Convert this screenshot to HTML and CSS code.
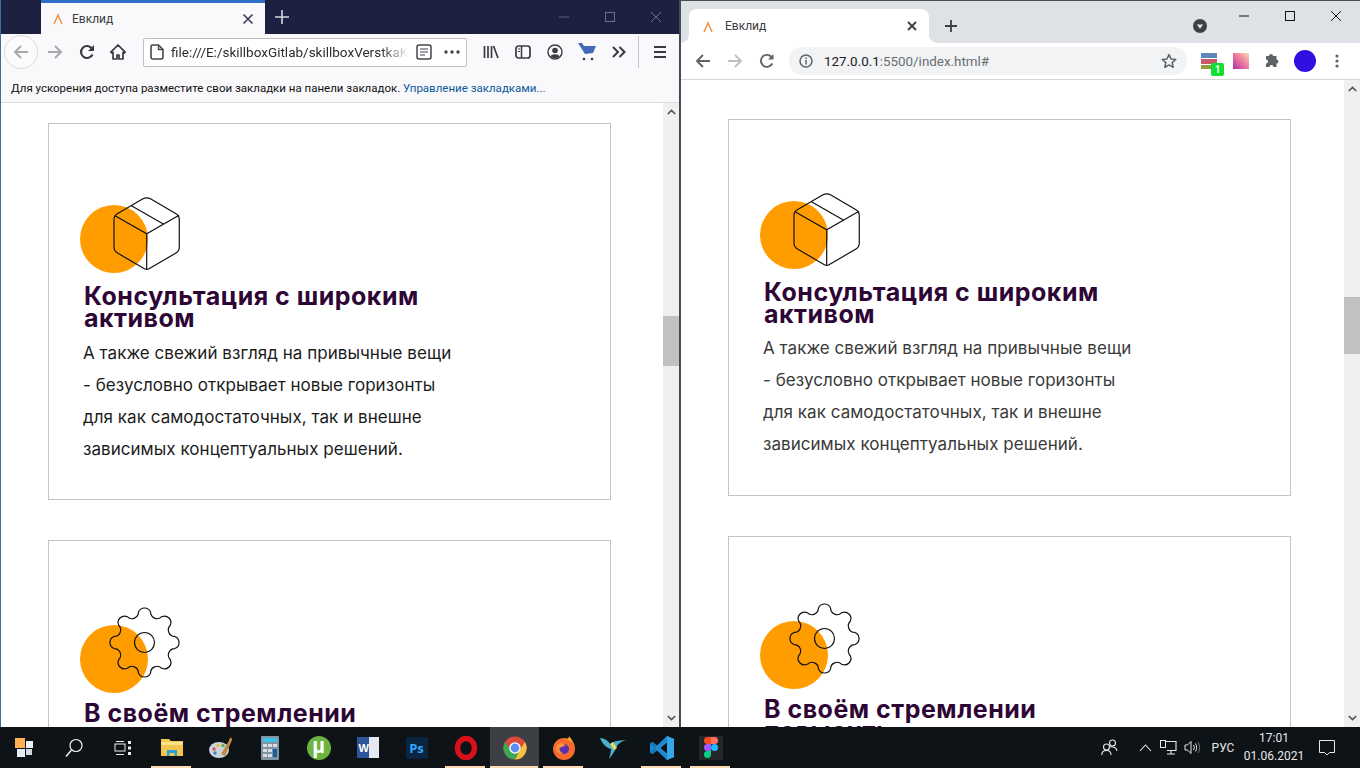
FILE: index.html
```html
<!DOCTYPE html>
<html lang="ru">
<head>
<meta charset="utf-8">
<title>Евклид</title>
<link rel="stylesheet" href="styles.css">
</head>
<body>
<div class="desktop">
  <section class="window ff">
    <div class="ff-tabs">
      <div class="ff-tab">
        <svg class="fav" width="12" height="12" viewBox="0 0 12 12"><path d="M2 11 6 2l4 9M3 8" fill="none" stroke="#f08a3c" stroke-width="1.4"/></svg>
        <span class="tab-title">Евклид</span>
        <svg class="ff-tab-x" width="12" height="12" viewBox="0 0 12 12"><path d="M1.5 1.5l9 9M10.5 1.5l-9 9" stroke="#33364a" stroke-width="1.5"/></svg>
      </div>
      <div class="ff-plus"><svg width="14" height="14" viewBox="0 0 14 14"><path d="M7 0v14M0 7h14" stroke="#d8d9e0" stroke-width="1.6"/></svg></div>
      <div class="grow"></div>
      <div class="ctl"><svg width="12" height="12" viewBox="0 0 12 12"><path d="M1 6h10" stroke="#5c6078"/></svg></div>
      <div class="ctl"><svg width="12" height="12" viewBox="0 0 12 12"><rect x="1.5" y="1.5" width="9" height="9" fill="none" stroke="#6c7088"/></svg></div>
      <div class="ctl"><svg width="12" height="12" viewBox="0 0 12 12"><path d="M1 1l10 10M11 1 1 11" stroke="#6c7088"/></svg></div>
    </div>
    <div class="ff-nav">
      <div class="slot"><div class="ff-back"><svg width="16" height="16" viewBox="0 0 16 16"><path d="M15 8H2M8 2 2 8l6 6" fill="none" stroke="#a8a8ae" stroke-width="2"/></svg></div></div>
      <div class="slot"><svg width="16" height="16" viewBox="0 0 16 16"><path d="M1 8h13M8 2l6 6-6 6" fill="none" stroke="#a8a8ae" stroke-width="2"/></svg></div>
      <div class="slot"><svg width="16" height="16" viewBox="0 0 16 16"><path d="M13.5 10.5A6 6 0 1 1 13 4.6" fill="none" stroke="#3a3a40" stroke-width="2.2"/><path d="M15 1v6H9z" fill="#3a3a40"/></svg></div>
      <div class="slot"><svg width="16" height="16" viewBox="0 0 16 16"><path d="M8 1 .8 8.2l1.2 1L3 8.4V15h4v-4h2v4h4V8.4l1 .8 1.2-1z" fill="none" stroke="#3a3a40" stroke-width="1.7" stroke-linejoin="round"/></svg></div>
      <div></div>
      <div class="ff-url">
        <svg class="page-ico" width="14" height="16" viewBox="0 0 14 16"><path d="M2.5 1h6L13 5.5V13a2 2 0 0 1-2 2H3a2 2 0 0 1-2-2V2.5A1.5 1.5 0 0 1 2.5 1z" fill="none" stroke="#45454c" stroke-width="1.6"/><path d="M8.5 1v4.500H13" fill="none" stroke="#45454c" stroke-width="1.3"/></svg>
        <span class="ff-url-text">file:///E:/skillboxGitlab/skillboxVerstkaKu</span>
        <svg class="reader" width="16" height="16" viewBox="0 0 16 16"><rect x="1" y="1" width="14" height="14" rx="2" fill="none" stroke="#45454c" stroke-width="1.5"/><path d="M4 5h8M4 8h8M4 11h5" stroke="#45454c" stroke-width="1.2"/></svg>
        <svg class="dots" width="16" height="4" viewBox="0 0 16 4"><circle cx="2" cy="2" r="1.700" fill="#45454c"/><circle cx="8" cy="2" r="1.700" fill="#45454c"/><circle cx="14" cy="2" r="1.700" fill="#45454c"/></svg>
      </div>
      <div></div>
      <div class="slot"><svg width="16" height="16" viewBox="0 0 16 16"><path d="M1.500 2v12M5 2v12M8.500 2v12M10.500 2l4.500 12" stroke="#3a3a40" stroke-width="1.700" fill="none"/></svg></div>
      <div class="slot"><svg width="16" height="16" viewBox="0 0 16 16"><rect x="1" y="2" width="14" height="12" rx="2.500" fill="none" stroke="#3a3a40" stroke-width="1.700"/><path d="M6.500 2v12" stroke="#3a3a40" stroke-width="1.500"/><path d="M3 5h2M3 7.500h2" stroke="#3a3a40"/></svg></div>
      <div class="slot"><svg width="16" height="16" viewBox="0 0 16 16"><circle cx="8" cy="8" r="7" fill="none" stroke="#3a3a40" stroke-width="1.400"/><circle cx="8" cy="6.500" r="2.800" fill="#3a3a40"/><path d="M3.500 12.500c1-3 8-3 9 0-2 2.200-7 2.200-9 0z" fill="#3a3a40"/></svg></div>
      <div class="slot"><svg width="18" height="18" viewBox="0 0 18 18"><path d="M0 0h4l2 3h12l-3 7-8 1z" fill="#4169b8"/><circle cx="6" cy="16" r="1.300" fill="#3a3a40"/><circle cx="14" cy="16" r="1.300" fill="#3a3a40"/></svg></div>
      <div class="slot"><svg width="14" height="12" viewBox="0 0 14 12"><path d="M1 1l5 5-5 5M7.500 1l5 5-5 5" fill="none" stroke="#3a3a40" stroke-width="2"/></svg></div>
      <div class="slot"><span class="ff-sep"></span></div>
      <div class="slot"><svg width="14" height="12" viewBox="0 0 14 12"><path d="M1 1h12M1 6h12M1 11h12" stroke="#3a3a40" stroke-width="1.800"/></svg></div>
    </div>
    <div class="ff-bookmarks">Для ускорения доступа разместите свои закладки на панели закладок. <a class="ff-link" href="#">Управление закладками...</a></div>
    <div class="viewport">
      <div class="page page-ff">
        <article class="card">
          <div class="icon-box">
            <svg class="ico ico-cube" width="100" height="77" viewBox="0 0 100 77"><circle cx="34" cy="43" r="34" fill="#ff9c00"/><path d="M62.500 3Q66.700.7 70.900 3L96 17.800Q99.300 19.700 99.300 23.500V51Q99.300 55 96 57L69 72.700Q66.700 74 64.400 72.700L37.500 57Q34 55 34 51V23.500Q34 19.700 37.300 17.800ZM34.600 19.500l32.100 18.300 32.300-18.500M66.700 37.800V74M51 9.500l32.300 18.500" fill="none" stroke="#111" stroke-width="1.200"/></svg>
          </div>
          <h2 class="card-title">Консультация с широким активом</h2>
          <p class="card-text">А также свежий взгляд на привычные вещи - безусловно открывает новые горизонты для как самодостаточных, так и внешне зависимых концептуальных решений.</p>
        </article>
        <article class="card">
          <div class="icon-box">
            <svg class="ico ico-gear" width="100" height="86" viewBox="0 0 100 86"><circle cx="34" cy="52" r="34" fill="#ff9c00"/><g transform="translate(64.500 35.500)" fill="none" stroke="#111" stroke-width="1.200"><circle r="10"/><path d="M30.400-6.050A6.500 6.500 0 0 1 30.400 6.050A6.500 6.500 0 0 0 25.800 17.200A6.500 6.500 0 0 1 17.200 25.800A6.500 6.500 0 0 0 6.050 30.400A6.500 6.500 0 0 1-6.050 30.400A6.500 6.500 0 0 0-17.200 25.800A6.500 6.500 0 0 1-25.800 17.200A6.500 6.500 0 0 0-30.400 6.050A6.500 6.500 0 0 1-30.400-6.050A6.500 6.500 0 0 0-25.800-17.200A6.500 6.500 0 0 1-17.200-25.800A6.500 6.500 0 0 0-6.050-30.400A6.500 6.500 0 0 1 6.050-30.400A6.500 6.500 0 0 0 17.200-25.800A6.500 6.500 0 0 1 25.800-17.200A6.500 6.500 0 0 0 30.400-6.050Z"/></g></svg>
          </div>
          <h2 class="card-title">В своём стремлении повысить</h2>
        </article>
      </div>
      <div class="scrollbar">
        <svg class="sb-arrow" width="9" height="6" viewBox="0 0 9 6"><path d="M.8 5 4.500 1.400 8.200 5" fill="none" stroke="#555" stroke-width="1.700"/></svg>
        <div class="thumb thumb-ff"></div>
        <div class="grow"></div>
        <svg class="sb-arrow" width="9" height="6" viewBox="0 0 9 6"><path d="M.8 1 4.500 4.600 8.200 1" fill="none" stroke="#555" stroke-width="1.700"/></svg>
      </div>
    </div>
  </section>

  <section class="window gc">
    <div class="gc-tabs">
      <div class="gc-tab">
        <svg class="fav" width="12" height="13" viewBox="0 0 12 13"><path d="M2 12 6 3l4 9" fill="none" stroke="#f08a3c" stroke-width="1.400"/></svg>
        <span class="tab-title">Евклид</span>
        <svg class="gc-tab-x" width="10" height="10" viewBox="0 0 10 10"><path d="M1 1l8 8M9 1 1 9" stroke="#3c4043" stroke-width="1.800"/></svg>
      </div>
      <div class="gc-plus"><svg width="12" height="12" viewBox="0 0 12 12"><path d="M6 0v12M0 6h12" stroke="#3c4043" stroke-width="1.800"/></svg></div>
      <div class="grow"></div>
      <div class="gc-drop"><svg width="14" height="14" viewBox="0 0 14 14"><circle cx="7" cy="7" r="7" fill="#3c4043"/><path d="M3.800 5.500h6.400L7 9.800z" fill="#dee1e6"/></svg></div>
      <div class="ctl"><svg width="12" height="12" viewBox="0 0 12 12"><path d="M1 6h10" stroke="#111"/></svg></div>
      <div class="ctl"><svg width="12" height="12" viewBox="0 0 12 12"><rect x="1.500" y="1.500" width="9" height="9" fill="none" stroke="#111"/></svg></div>
      <div class="ctl"><svg width="12" height="12" viewBox="0 0 12 12"><path d="M1 1l10 10M11 1 1 11" stroke="#111"/></svg></div>
    </div>
    <div class="gc-nav">
      <div class="slot"><svg width="16" height="16" viewBox="0 0 16 16"><path d="M15 8H2M8 2 2 8l6 6" fill="none" stroke="#5f6368" stroke-width="1.900"/></svg></div>
      <div class="slot"><svg width="16" height="16" viewBox="0 0 16 16"><path d="M1 8h13M8 2l6 6-6 6" fill="none" stroke="#bdc1c6" stroke-width="1.900"/></svg></div>
      <div class="slot"><svg width="16" height="16" viewBox="0 0 16 16"><path d="M13.300 10.500A6 6 0 1 1 12.800 4.400" fill="none" stroke="#5f6368" stroke-width="1.900"/><path d="M14.500 1v5.500H9z" fill="#5f6368"/></svg></div>
      <div></div>
      <div class="gc-url">
        <svg class="gc-info" width="14" height="14" viewBox="0 0 14 14"><circle cx="7" cy="7" r="6" fill="none" stroke="#5f6368" stroke-width="1.500"/><path d="M7 6v4.500M7 3.500v1.500" stroke="#5f6368" stroke-width="1.500"/></svg>
        <span class="gc-url-text">127.0.0.1<span class="gc-url-dim">:5500/index.html#</span></span>
        <svg width="16" height="16" viewBox="0 0 16 16"><path d="M8 1.500l2 4.400 4.800.5-3.600 3.200 1 4.700L8 11.900l-4.200 2.400 1-4.700L1.200 6.400 6 5.900z" fill="none" stroke="#5f6368" stroke-width="1.500" stroke-linejoin="round"/></svg>
      </div>
      <div></div>
      <div class="slot">
        <div class="ext-stack"><span class="ext-a"></span><span class="ext-b"></span><span class="ext-c"></span><span class="ext-badge">1</span></div>
      </div>
      <div class="slot"><span class="ext-pink"></span></div>
      <div class="slot"><svg width="16" height="16" viewBox="0 0 16 16"><path d="M6 1a2 2 0 0 1 2 2h3.500v3.500a2 2 0 0 1 0 4V14H8.500a2 2 0 0 0-4 0H1v-3.500a2 2 0 0 0 0-4V3h3a2 2 0 0 1 2-2z" fill="#5f6368"/></svg></div>
      <div class="slot"><span class="avatar"></span></div>
      <div class="slot"><svg width="4" height="14" viewBox="0 0 4 14"><circle cx="2" cy="2" r="1.600" fill="#5f6368"/><circle cx="2" cy="7" r="1.600" fill="#5f6368"/><circle cx="2" cy="12" r="1.600" fill="#5f6368"/></svg></div>
    </div>
    <div class="viewport">
      <div class="page page-gc">
        <article class="card">
          <div class="icon-box">
            <svg class="ico ico-cube" width="100" height="77" viewBox="0 0 100 77"><circle cx="34" cy="43" r="34" fill="#ff9c00"/><path d="M62.500 3Q66.700.7 70.900 3L96 17.800Q99.300 19.700 99.300 23.500V51Q99.300 55 96 57L69 72.700Q66.700 74 64.400 72.700L37.500 57Q34 55 34 51V23.500Q34 19.700 37.300 17.800ZM34.600 19.500l32.100 18.300 32.300-18.500M66.700 37.800V74M51 9.500l32.300 18.500" fill="none" stroke="#111" stroke-width="1.200"/></svg>
          </div>
          <h2 class="card-title">Консультация с широким активом</h2>
          <p class="card-text">А также свежий взгляд на привычные вещи - безусловно открывает новые горизонты для как самодостаточных, так и внешне зависимых концептуальных решений.</p>
        </article>
        <article class="card">
          <div class="icon-box">
            <svg class="ico ico-gear" width="100" height="86" viewBox="0 0 100 86"><circle cx="34" cy="52" r="34" fill="#ff9c00"/><g transform="translate(64.500 35.500)" fill="none" stroke="#111" stroke-width="1.200"><circle r="10"/><path d="M30.400-6.050A6.500 6.500 0 0 1 30.400 6.050A6.500 6.500 0 0 0 25.800 17.200A6.500 6.500 0 0 1 17.200 25.800A6.500 6.500 0 0 0 6.050 30.400A6.500 6.500 0 0 1-6.050 30.400A6.500 6.500 0 0 0-17.200 25.800A6.500 6.500 0 0 1-25.800 17.200A6.500 6.500 0 0 0-30.400 6.050A6.500 6.500 0 0 1-30.400-6.050A6.500 6.500 0 0 0-25.800-17.200A6.500 6.500 0 0 1-17.200-25.800A6.500 6.500 0 0 0-6.050-30.400A6.500 6.500 0 0 1 6.050-30.400A6.500 6.500 0 0 0 17.200-25.800A6.500 6.500 0 0 1 25.800-17.200A6.500 6.500 0 0 0 30.400-6.050Z"/></g></svg>
          </div>
          <h2 class="card-title">В своём стремлении повысить</h2>
        </article>
      </div>
      <div class="scrollbar scrollbar-gc">
        <svg class="sb-arrow" width="9" height="6" viewBox="0 0 9 6"><path d="M.8 5 4.500 1.400 8.200 5" fill="none" stroke="#555" stroke-width="1.700"/></svg>
        <div class="thumb thumb-gc"></div>
        <div class="grow"></div>
        <svg class="sb-arrow" width="9" height="6" viewBox="0 0 9 6"><path d="M.8 1 4.500 4.600 8.200 1" fill="none" stroke="#555" stroke-width="1.700"/></svg>
      </div>
    </div>
  </section>
</div>

<footer class="taskbar">
  <div class="tb-item"><svg width="20" height="20" viewBox="0 0 20 20"><rect x="0" y="0" width="10" height="10" fill="#ffb052"/><rect x="11" y="3" width="7" height="7" fill="#eef2f8"/><rect x="2" y="11" width="8" height="8" fill="#e6ecf4"/><rect x="11" y="11" width="6" height="6" fill="#d4dbe6"/></svg></div>
  <div class="tb-item"><svg width="18" height="20" viewBox="0 0 18 20"><circle cx="11" cy="7.500" r="6" fill="none" stroke="#f0f0f0" stroke-width="1.200"/><path d="M6.500 12 1 18.500" stroke="#f0f0f0" stroke-width="1.500"/></svg></div>
  <div class="tb-item"><svg width="18" height="16" viewBox="0 0 18 16"><rect x="1" y="4" width="10" height="7" fill="none" stroke="#eee"/><path d="M2 1.500h8M2 14.500h8" stroke="#eee"/><path d="M14 1h3v3h-3zM14 6.500h3v3h-3zM14 12h3v3h-3z" fill="#eee"/></svg></div>
  <div class="tb-item tb-running"><svg width="22" height="19" viewBox="0 0 22 19"><path d="M0 1h8l2 2h12v15H0z" fill="#f5c64d"/><path d="M0 4h22v3H0z" fill="#fbe28e"/><path d="M6 18v-6h10v6h-2.500v-3h-5v3z" fill="#2c9fd8"/></svg></div>
  <div class="tb-item"><svg width="24" height="22" viewBox="0 0 24 22"><ellipse cx="10" cy="13" rx="10" ry="8" fill="#c9d4dc"/><circle cx="5" cy="12" r="1.700" fill="#e05050"/><circle cx="9" cy="8.500" r="1.700" fill="#e6c030"/><circle cx="14" cy="8.500" r="1.700" fill="#60b050"/><circle cx="6" cy="16" r="1.700" fill="#4080d0"/><path d="M12 17 21 2l2 1-7 16z" fill="#c08840"/><path d="M20 3l2-3 1 3z" fill="#e09040"/></svg></div>
  <div class="tb-item"><svg width="18" height="24" viewBox="0 0 18 24"><rect width="18" height="24" rx="1" fill="#8094a4"/><rect x="2" y="2" width="14" height="4" fill="#3fc0e8"/><g fill="#d8dee4"><rect x="2" y="8" width="4" height="3"/><rect x="7" y="8" width="4" height="3"/><rect x="2" y="13" width="4" height="3"/><rect x="7" y="13" width="4" height="3"/><rect x="2" y="18" width="4" height="3"/><rect x="7" y="18" width="4" height="3"/></g><rect x="12" y="8" width="4" height="3" fill="#d8dee4"/><rect x="12" y="13" width="4" height="8" fill="#1c5c9c"/></svg></div>
  <div class="tb-item"><span class="utorrent">µ</span></div>
  <div class="tb-item"><span class="word"><span class="word-w">W</span></span></div>
  <div class="tb-item"><span class="ps">Ps</span></div>
  <div class="tb-item tb-running"><svg width="24" height="24" viewBox="0 0 24 24"><ellipse cx="12" cy="12" rx="8.500" ry="9.500" fill="none" stroke="#d8101c" stroke-width="5.500"/></svg></div>
  <div class="tb-item tb-active"><svg width="24" height="24" viewBox="0 0 24 24"><circle cx="12" cy="12" r="11.500" fill="#dd4a3c"/><path d="M21.900 6A11.500 11.500 0 0 1 12 23.500L17 14z" fill="#f5c33c"/><path d="M2.100 6A11.500 11.500 0 0 0 12 23.500L17 14H8z" fill="#3ca853"/><circle cx="12" cy="12" r="5.800" fill="#fff"/><circle cx="12" cy="12" r="4.400" fill="#5a8ff0"/></svg></div>
  <div class="tb-item tb-running"><svg width="24" height="24" viewBox="0 0 24 24"><circle cx="12" cy="13" r="11" fill="#f66a2c"/><path d="M12 3c4 0 11 3 11 10 0-5-3-9-6-13 0 3-2 3-5 3z" fill="#ffb020"/><circle cx="12" cy="13" r="5" fill="#5b2fb0"/><path d="M4 13c0-4 3-6 5-6l5 2-4 2c-3 0-4 4 1 6-4 1-7-1-7-4z" fill="#f9903c"/></svg></div>
  <div class="tb-item"><svg width="26" height="22" viewBox="0 0 26 22"><path d="M0 1c3 0 8 2 10 6l3-2c3-1 8-2 13-2-4 1-7 3-9 6-2 5-4 8-8 13 1-4 2-7 2-10C6 11 2 6 0 1z" fill="#45b0c8"/><path d="M10 7l3-2 4 6-3 2z" fill="#e8d860"/></svg></div>
  <div class="tb-item tb-running"><svg width="24" height="24" viewBox="0 0 24 24"><path d="M17 0l7 3v18l-7 3-10-9.500L2.500 18 0 16.500V7.500L2.500 6 7 9.500z" fill="#1f8ad2"/><path d="M17 6.500 10.500 12l6.500 5.500z" fill="#0e0f12"/><path d="M17 0l7 3v18l-7 3z" fill="#33a7ea"/><path d="M0 7.500 2.500 6l4.500 3.500-3 2.500zM0 16.500 2.500 18 7 14.500 4 12z" fill="#1a76b8"/></svg></div>
  <div class="tb-item tb-running"><span class="figma-box"><svg width="14" height="21" viewBox="0 0 14 21"><path d="M0 3.500A3.500 3.500 0 0 1 3.500 0H7v7H3.500A3.500 3.500 0 0 1 0 3.500z" fill="#f24e1e"/><path d="M7 0h3.500a3.500 3.500 0 0 1 0 7H7z" fill="#ff7262"/><path d="M0 10.500A3.500 3.500 0 0 1 3.500 7H7v7H3.500A3.500 3.500 0 0 1 0 10.500z" fill="#a259ff"/><circle cx="10.500" cy="10.500" r="3.500" fill="#1abcfe"/><path d="M0 17.500A3.500 3.500 0 0 1 3.500 14H7v3.500a3.500 3.500 0 0 1-7 0z" fill="#0acf83"/></svg></span></div>
  <div class="grow"></div>
  <div class="tray tray-people"><svg width="18" height="17" viewBox="0 0 18 17"><circle cx="11.500" cy="4" r="3" fill="none" stroke="#e8e8e8" stroke-width="1.100"/><circle cx="5.500" cy="8" r="3" fill="none" stroke="#e8e8e8" stroke-width="1.100"/><path d="M.8 16c0-3 2-4.500 4.700-4.500S10 13 10 16M9 8c3-1 7 1 7 4" fill="none" stroke="#e8e8e8" stroke-width="1.100"/></svg></div>
  <div class="tray tray-caret"><svg width="13" height="8" viewBox="0 0 13 8"><path d="M1 7l5.500-6L12 7" fill="none" stroke="#e8e8e8" stroke-width="1.100"/></svg></div>
  <div class="tray tray-net"><svg width="17" height="15" viewBox="0 0 17 15"><path d="M3 1.500h13v9H7M11 10.500v3M7 14h8" fill="none" stroke="#e8e8e8" stroke-width="1.100"/><rect x=".5" y=".5" width="5" height="7" fill="#0e1318" stroke="#e8e8e8"/></svg></div>
  <div class="tray tray-vol"><svg width="17" height="15" viewBox="0 0 17 15"><path d="M1 5h2.500L7 1.500v12L3.500 10H1z" fill="none" stroke="#e8e8e8"/><path d="M9.500 5c1 1.500 1 3.500 0 5M11.500 3.500c1.500 2.500 1.500 5.500 0 8" fill="none" stroke="#e8e8e8"/><path d="M14 2c2 3 2 8 0 11" fill="none" stroke="#777"/></svg></div>
  <div class="tray tray-lang">РУС</div>
  <div class="clock"><span>17:01</span><span>01.06.2021</span></div>
  <div class="tray tray-note"><svg width="16" height="16" viewBox="0 0 16 16"><path d="M.5.500h15v12h-5L8 15l-2.500-2.500h-5z" fill="none" stroke="#e8e8e8"/></svg></div>
</footer>
</body>
</html>
```
FILE: styles.css
```css
* { box-sizing: border-box; }
html, body { margin: 0; height: 100%; overflow: hidden; }
body { width: 1360px; height: 768px; background: #0e1318; font-family: Roboto, "Open Sans", sans-serif; }
svg { display: block; flex: none; }
.grow { flex: 1; }
.desktop { display: flex; height: 727px; }
.window { width: 680px; height: 727px; display: flex; flex-direction: column; background: #fff; overflow: hidden; }
.ff { border-left: 1px solid #3f6d9e; border-right: 1px solid #3c4a55; }
.gc { border-left: 1px solid #4a4d52; }

.ctl { width: 46px; display: flex; align-items: center; justify-content: center; }
.slot { display: flex; align-items: center; justify-content: center; }
.fav { margin-right: 8px; }
.tab-title { font-size: 12px; color: #3c4043; }

/* firefox */
.ff-tabs { height: 34px; background: #1d2040; display: flex; padding-left: 40px; padding-right: 0; }
.ff-tab { width: 224px; margin-top: 0; border-top: 3px solid #2f6fc4; background: #f9f9fb; display: flex; align-items: center; padding: 0 11px; }
.ff-tab-x { margin-left: auto; }
.ff-plus { width: 34px; display: flex; align-items: center; justify-content: center; }
.ff-nav { height: 36px; background: #f9f9fb; display: grid; grid-template-columns: 32px 36px 28px 34px 8px 324px 8px 32px 32px 32px 31px 34px 4px 39px; padding-left: 4px; align-items: center; }
.ff-back { width: 34px; height: 34px; flex: none; border: 1px solid #dcdce0; border-radius: 50%; background: #fbfbfc; display: flex; align-items: center; justify-content: center; }
.ff-url { height: 29px; background: #fff; border: 1px solid #bdbdc2; border-radius: 2px; display: flex; align-items: center; padding: 0 6px 0 6px; }
.page-ico { margin-right: 7px; }
.ff-url-text { font-size: 13.5px; color: #2c2c30; white-space: nowrap; overflow: hidden; width: 238px; flex: none; -webkit-mask-image: linear-gradient(90deg, #000 88%, transparent); mask-image: linear-gradient(90deg, #000 88%, transparent); }
.reader { margin-left: auto; margin-right: 12px; }
.ff-sep { width: 1px; height: 32px; background: #c8c8cc; }
.ff-bookmarks { height: 33px; background: #f9f9fb; border-bottom: 1px solid #dedee2; font-size: 11.5px; color: #111; padding: 0 0 0 10px; line-height: 36px; white-space: nowrap; }
.ff-link { color: #0a5a9c; text-decoration: none; }

/* chrome */
.gc-tabs { height: 43px; background: #dee1e6; border-top: 1px solid #4a4d52; display: flex; padding-left: 8px; padding-right: 1px; }
.gc-tab { position: relative; width: 240px; margin-top: 8px; background: #fff; border-radius: 8px 8px 0 0; display: flex; align-items: center; padding: 0 12px 0 13px; }
.gc-tab::before, .gc-tab::after { content: ""; position: absolute; bottom: 0; width: 8px; height: 8px; }
.gc-tab::before { left: -8px; background: radial-gradient(circle at 0 0, transparent 7.5px, #fff 8px); }
.gc-tab::after { right: -8px; background: radial-gradient(circle at 100% 0, transparent 7.5px, #fff 8px); }
.gc-tab-x { margin-left: auto; }
.gc-tab .fav { margin-right: 11px; }
.gc-plus { width: 44px; display: flex; align-items: center; justify-content: center; margin-top: 8px; }
.gc-drop { width: 32px; margin-right: 5px; margin-top: 8px; display: flex; align-items: center; justify-content: center; }
.gc-tabs .ctl { height: 30px; }
.gc-nav { height: 37px; background: #fff; border-bottom: 1px solid #d8d8dc; display: grid; grid-template-columns: 32px 32px 32px 6px 398px 6px 32px 32px 32px 32px 32px; padding-left: 6px; align-items: center; }
.gc-url { height: 28px; background: #f1f3f4; border-radius: 14px; display: flex; align-items: center; padding: 0 10px 0 10px; }
.gc-info { margin-right: 11px; }
.gc-url-text { font-size: 13.4px; color: #202124; flex: 1; }
.gc-url-dim { color: #6a6e73; }
.ext-stack { position: relative; width: 16px; height: 16px; display: flex; flex-direction: column; gap: 1px; }
.ext-stack span { display: block; }
.ext-a { height: 5px; background: #5f86b8; }
.ext-b { height: 5px; background: #c85a68; }
.ext-c { height: 4px; background: #8fa040; }
.ext-stack .ext-badge { position: absolute; right: -7px; bottom: -7px; width: 13px; height: 13px; border-radius: 2px; background: #10e030; color: #fff; font-size: 10px; font-weight: 700; line-height: 13px; text-align: center; }
.ext-pink { display: block; width: 16px; height: 16px; background: linear-gradient(45deg, #b030a0, #f080a0 55%, #ffd8b0); }
.avatar { display: block; width: 22px; height: 22px; border-radius: 50%; background: #3010e0; }

/* page */
.viewport { flex: 1; min-height: 0; display: flex; }
.page { flex: 1; min-width: 0; overflow: hidden; padding-left: 47px; display: flex; flex-direction: column; gap: 40px; }
.page-ff { padding-top: 20px; }
.page-gc { padding-top: 39px; padding-left: 47px; }
.card { flex: none; width: 563px; height: 377px; border: 1px solid #c4c4c4; padding-left: 35px; font-family: Inter, "Open Sans", sans-serif; }
.icon-box { height: 161px; }
.ico { margin-left: -4px; }
.ico-cube { position: relative; top: 72px; }
.ico-gear { position: relative; top: 66px; }
.card-title { margin: 0; width: 370px; font-size: 25px; line-height: 22px; font-weight: 700; letter-spacing: .5px; color: #2d0635; }
.card-text { margin: 7px 0 0 -1px; width: 375px; font-size: 17px; line-height: 32px; letter-spacing: .04px; color: #3a3a3a; }
.ff .card-text { margin-top: 8px; color: #1c1c1c; }

.scrollbar { width: 16px; background: #f0f0f0; display: flex; flex-direction: column; align-items: center; padding: 6px 0; }
.thumb { align-self: stretch; background: #c1c1c1; flex: none; }
.thumb-ff { margin-top: 201px; height: 50px; }
.thumb-gc { margin-top: 205px; height: 57px; }

/* taskbar */
.taskbar { height: 41px; background: #0e1318; display: flex; align-items: center; color: #e8e8e8; }
.tb-item { position: relative; width: 49px; height: 41px; display: flex; align-items: center; justify-content: center; }
.tb-active { background: #3c4045; }
.tb-running::after, .tb-active::after { content: ""; position: absolute; bottom: 0; height: 2px; background: #ffd9b0; }
.tb-running::after { left: 4px; right: 5px; }
.tb-active::after { left: 0; right: 1px; }
.utorrent { width: 24px; height: 24px; border-radius: 50%; background: #6db33f; color: #fff; font: 700 22px/20px "Liberation Sans", sans-serif; text-align: center; }
.word { width: 22px; height: 21px; background: linear-gradient(90deg, #2b579a 55%, #e4e8f0 55%); display: flex; align-items: center; padding-left: 2px; }
.word-w { color: #fff; font: 700 11px "Liberation Sans", sans-serif; }
.ps { width: 22px; height: 22px; background: #0a2540; border-radius: 2px; color: #31a8ff; font: 700 13px/22px "Open Sans", sans-serif; text-align: center; }
.figma-box { width: 24px; height: 24px; background: #24262a; display: flex; align-items: center; justify-content: center; }
.tray { display: flex; align-items: center; justify-content: center; height: 41px; font-size: 12px; }
.tray-people { width: 28px; margin-right: 13px; }
.tray-caret { width: 16px; margin-right: 4px; }
.tray-net { width: 22px; margin-right: 2px; }
.tray-vol { width: 22px; margin-right: 5px; }
.tray-lang { width: 30px; margin-right: 6px; }
.clock { width: 60px; margin-right: 10px; display: flex; flex-direction: column; align-items: center; gap: 3px; font-size: 12px; line-height: 15px; }
.tray-note { width: 26px; margin-right: 20px; }
```
